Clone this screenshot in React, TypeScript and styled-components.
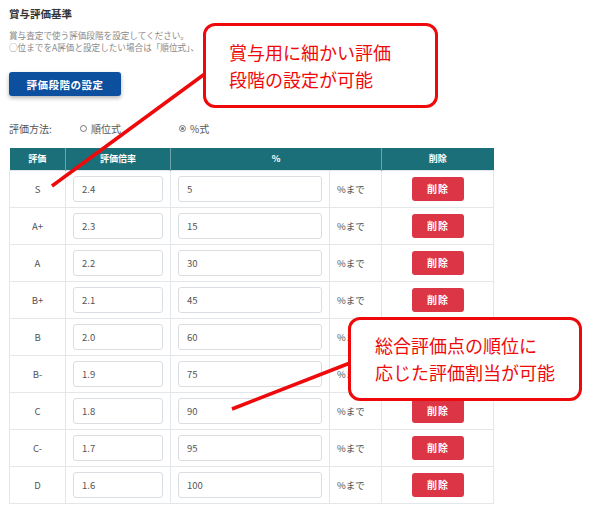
import React from "react";
import styled, { createGlobalStyle } from "styled-components";

const GlobalStyle = createGlobalStyle`
  html, body { margin: 0; padding: 0; background: #fff; }
  body { font-family: "Noto Sans CJK JP", "Noto Sans", sans-serif; color: #444; }
  * { box-sizing: border-box; }
`;

const Page = styled.div`
  position: relative;
  width: 600px;
  height: 512px;
  padding: 7px 9px 0 9px;
  overflow: hidden;
`;

const Title = styled.div`
  font-size: 10.5px;
  line-height: 14px;
  font-weight: bold;
  color: #333;
`;

const Desc = styled.div`
  margin-top: 8px;
  font-size: 8.6px;
  line-height: 12px;
  color: #8a8a8a;
  white-space: nowrap;
`;

const PrimaryButton = styled.button`
  display: block;
  margin-top: 19px;
  width: 112px;
  height: 24px;
  border: none;
  border-radius: 3px;
  background: #0d4f9f;
  color: #fff;
  font-family: inherit;
  font-size: 10.5px;
  font-weight: bold;
  letter-spacing: 0.5px;
  box-shadow: 0 2px 4px rgba(0, 0, 0, 0.3);
  padding: 0;
`;

const MethodRow = styled.div`
  margin-top: 24px;
  display: flex;
  align-items: center;
  height: 16px;
  font-size: 10px;
  color: #555;
`;

const MethodLabel = styled.span`
  width: 71px;
`;

const RadioOption = styled.label<{ $width?: number }>`
  display: flex;
  align-items: center;
  gap: 4px;
  width: ${(p) => (p.$width ? `${p.$width}px` : "auto")};
`;

const RadioDot = styled.span<{ $checked?: boolean }>`
  width: 7px;
  height: 7px;
  border-radius: 50%;
  border: 1px solid #777;
  display: inline-flex;
  align-items: center;
  justify-content: center;
  &::after {
    content: "";
    width: 3px;
    height: 3px;
    border-radius: 50%;
    background: ${(p) => (p.$checked ? "#777" : "transparent")};
  }
`;

const Table = styled.table`
  margin-top: 12px;
  border-collapse: collapse;
  table-layout: fixed;
  width: 484px;
`;

const HeadCell = styled.th`
  background: #1b6f78;
  color: #fff;
  font-size: 9px;
  font-weight: bold;
  height: 22px;
  padding: 0;
  border-left: 1px solid #6fa3a9;
  text-align: center;
  &:first-child { border-left: none; }
`;

const Cell = styled.td<{ $align?: string }>`
  border: 1px solid #e4e7ea;
  height: 37px;
  padding: 0 7px;
  font-size: 9.5px;
  color: #555;
  text-align: ${(p) => p.$align || "left"};
`;

const ValueInput = styled.input`
  display: block;
  width: 100%;
  height: 26px;
  margin-top: 1px;
  border: 1px solid #dadde1;
  border-radius: 3px;
  padding: 0 8px;
  font-family: inherit;
  font-size: 9.5px;
  color: #555;
  background: #fff;
  outline: none;
`;

const DeleteButton = styled.button`
  width: 52px;
  height: 24px;
  border: none;
  border-radius: 3px;
  background: #dc3545;
  color: #fff;
  font-family: inherit;
  font-size: 10px;
  font-weight: bold;
  letter-spacing: 1px;
  padding: 0;
  margin-left: 23px;
`;

const Overlay = styled.svg`
  position: absolute;
  left: 0;
  top: 0;
  pointer-events: none;
`;

const Callout = styled.div<{ $left: number; $top: number; $w: number; $h: number; $padLeft: number }>`
  position: absolute;
  left: ${(p) => p.$left}px;
  top: ${(p) => p.$top}px;
  width: ${(p) => p.$w}px;
  height: ${(p) => p.$h}px;
  border: 3px solid #ee0a0a;
  border-radius: 12px;
  background: #fff;
  color: #ee0a0a;
  font-size: 18px;
  line-height: 27px;
  padding-left: ${(p) => p.$padLeft}px;
  display: flex;
  flex-direction: column;
  justify-content: center;
  white-space: nowrap;
`;

const rows = [
  ["S", "2.4", "5"],
  ["A+", "2.3", "15"],
  ["A", "2.2", "30"],
  ["B+", "2.1", "45"],
  ["B", "2.0", "60"],
  ["B-", "1.9", "75"],
  ["C", "1.8", "90"],
  ["C-", "1.7", "95"],
  ["D", "1.6", "100"],
];

export default function App() {
  return (
    <>
      <GlobalStyle />
      <Page>
        <Title>賞与評価基準</Title>
        <Desc>
          賞与査定で使う評価段階を設定してください。
          <br />
          ○位までをA評価と設定したい場合は「順位式」、
        </Desc>
        <PrimaryButton>評価段階の設定</PrimaryButton>
        <MethodRow>
          <MethodLabel>評価方法:</MethodLabel>
          <RadioOption $width={99}>
            <RadioDot />
            順位式
          </RadioOption>
          <RadioOption>
            <RadioDot $checked />
            %式
          </RadioOption>
        </MethodRow>
        <Table>
          <colgroup>
            <col style={{ width: 56 }} />
            <col style={{ width: 105 }} />
            <col style={{ width: 159 }} />
            <col style={{ width: 52 }} />
            <col style={{ width: 112 }} />
          </colgroup>
          <thead>
            <tr>
              <HeadCell>評価</HeadCell>
              <HeadCell>評価倍率</HeadCell>
              <HeadCell colSpan={2}>%</HeadCell>
              <HeadCell>削除</HeadCell>
            </tr>
          </thead>
          <tbody>
            {rows.map(([grade, rate, pct]) => (
              <tr key={grade}>
                <Cell $align="center">{grade}</Cell>
                <Cell>
                  <ValueInput defaultValue={rate} />
                </Cell>
                <Cell>
                  <ValueInput defaultValue={pct} />
                </Cell>
                <Cell>%まで</Cell>
                <Cell>
                  <DeleteButton>削除</DeleteButton>
                </Cell>
              </tr>
            ))}
          </tbody>
        </Table>
        <Overlay width={600} height={512} viewBox="0 0 600 512">
          <line x1={52} y1={186} x2={206} y2={73} stroke="#ee0a0a" strokeWidth={3.5} />
          <line x1={232} y1={409} x2={350} y2={363} stroke="#ee0a0a" strokeWidth={3.5} />
        </Overlay>
        <Callout $left={203} $top={23} $w={235} $h={85} $padLeft={23}>
          <span>賞与用に細かい評価</span>
          <span>段階の設定が可能</span>
        </Callout>
        <Callout $left={348} $top={317} $w={234} $h={84} $padLeft={24}>
          <span>総合評価点の順位に</span>
          <span>応じた評価割当が可能</span>
        </Callout>
      </Page>
    </>
  );
}
